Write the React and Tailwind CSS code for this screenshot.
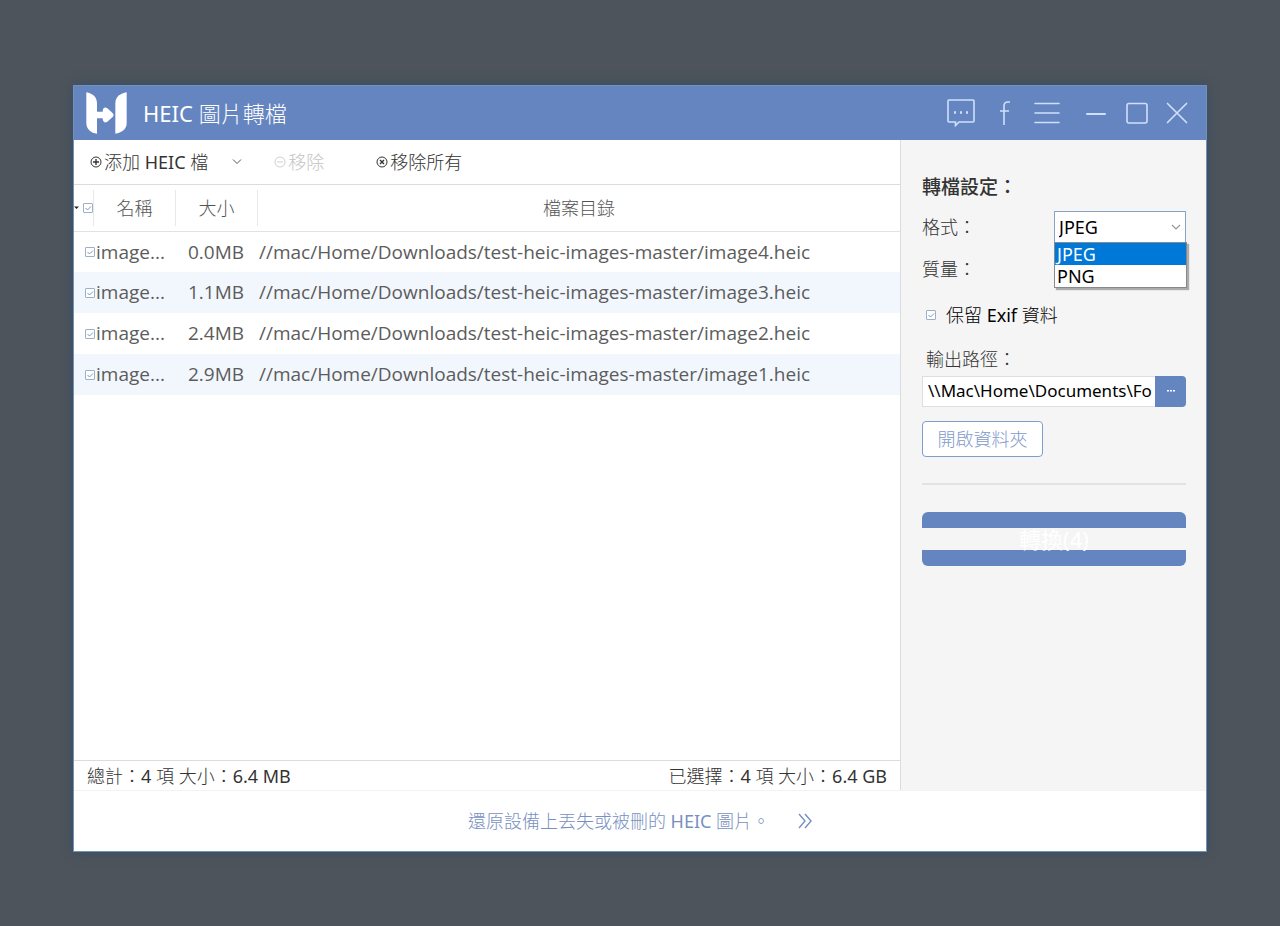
import { useState } from "react";

const initialFiles = [
  { id: 4, size: "0.0MB", path: "//mac/Home/Downloads/test-heic-images-master/image4.heic" },
  { id: 3, size: "1.1MB", path: "//mac/Home/Downloads/test-heic-images-master/image3.heic" },
  { id: 2, size: "2.4MB", path: "//mac/Home/Downloads/test-heic-images-master/image2.heic" },
  { id: 1, size: "2.9MB", path: "//mac/Home/Downloads/test-heic-images-master/image1.heic" },
];

const formats = ["JPEG", "PNG"];

const Logo = () => (
  <svg width="41" height="42" viewBox="0 0 123 126" fill="#fff" aria-hidden="true">
    <path d="M1 1C18 4 33 14 33 34V59H50C50 47 57 44 64 49L79 62C84 67 84 71 79 76L64 89C57 94 50 91 50 79H33V125C16 124 1 112 1 94Z" />
    <path d="M122 1C104 4 88 14 88 34V125C106 123 122 112 122 94Z" />
  </svg>
);

const CheckBox = ({ label, checked, onChange }) => (
  <span className="relative inline-block size-[10px] align-middle">
    <input
      type="checkbox"
      aria-label={label}
      checked={checked}
      onChange={onChange}
      className="block size-[10px] appearance-none rounded-[1px] border border-[#9db1c6] bg-white"
    />
    {checked && (
      <svg
        className="pointer-events-none absolute inset-0"
        width="10"
        height="10"
        viewBox="0 0 10 10"
        fill="none"
        stroke="#7d9bbd"
      >
        <path d="M2.5 5L4.5 7L8 3.5" />
      </svg>
    )}
  </span>
);

const CircleIcon = ({ children, thin }) => (
  <svg
    width="12"
    height="12"
    viewBox="0 0 12 12"
    fill="none"
    stroke="currentColor"
    strokeWidth={thin ? 0.8 : 1}
    aria-hidden="true"
  >
    <circle cx="6" cy="6" r="5" />
    {children}
  </svg>
);

const TitleBar = () => (
  <header className="flex h-[54px] items-center bg-[#6585c0] pr-[18px] pl-3 text-[#cfdffa]">
    <Logo />
    <h1 className="ml-4 flex-1 text-[22px] font-light text-white">
      <span className="font-normal">HEIC</span> 圖片轉檔
    </h1>
    <div className="flex items-center">
      <button aria-label="意見反饋">
        <svg width="28" height="28" viewBox="0 0 28 28" fill="none" stroke="currentColor" strokeWidth="1.6">
          <path d="M2 1H26Q27 1 27 2V22Q27 23 26 23H12L8.500 26.500V23H2Q1 23 1 22V2Q1 1 2 1Z" />
          <path d="M7 13.500H9M13 13.500H15M19 13.500H21" strokeWidth="2.400" />
        </svg>
      </button>
      <button aria-label="Facebook" className="ml-6">
        <svg width="12" height="24" viewBox="0 0 12 24" fill="none" stroke="currentColor" strokeWidth="1.6">
          <path d="M11 1H9Q5 1 5 5V24M1 10H10" />
        </svg>
      </button>
      <button aria-label="選單" className="ml-[23px]">
        <svg width="26" height="22" viewBox="0 0 26 22" fill="none" stroke="currentColor" strokeWidth="1.600" strokeLinecap="round">
          <path d="M1 1.500H25M1 11H25M1 20.500H25" />
        </svg>
      </button>
      <button aria-label="最小化" className="ml-[26px]">
        <svg width="20" height="22" viewBox="0 0 20 22" fill="none" stroke="currentColor" strokeWidth="2" strokeLinecap="round">
          <path d="M1 12H19" />
        </svg>
      </button>
      <button aria-label="最大化" className="ml-5">
        <svg width="22" height="22" viewBox="0 0 22 22" fill="none" stroke="currentColor" strokeWidth="1.600">
          <rect x="1" y="1.500" width="20" height="19.500" rx="2" />
        </svg>
      </button>
      <button aria-label="關閉" className="ml-[18px]">
        <svg width="22" height="22" viewBox="0 0 22 22" fill="none" stroke="currentColor" strokeWidth="1.700" strokeLinecap="round">
          <path d="M1.500 1.500L20.500 20.500M20.500 1.500L1.500 20.500" />
        </svg>
      </button>
    </div>
  </header>
);

const Toolbar = () => (
  <div className="flex h-[45px] items-center border-b border-[#dcdcdc] pl-4 text-lg font-light text-[#333]">
    <button className="flex items-center gap-0.5">
      <CircleIcon>
        <path d="M6 3V9M3 6H9" strokeWidth="1.400" />
      </CircleIcon>
      <span>
        添加 <span className="font-normal">HEIC</span> 檔
      </span>
    </button>
    <button aria-label="更多" className="ml-6">
      <svg width="10" height="10" viewBox="0 0 10 10" fill="none" stroke="#555">
        <path d="M1 2.500L5 6.500L9 2.500" />
      </svg>
    </button>
    <button disabled className="ml-8 flex items-center gap-0.5 text-[#c4c4c4]">
      <CircleIcon thin>
        <path d="M3 6H9" />
      </CircleIcon>
      <span>移除</span>
    </button>
    <button className="ml-[52px] flex items-center gap-0.5">
      <CircleIcon>
        <path d="M4 4L8 8M8 4L4 8" strokeWidth="1.400" />
      </CircleIcon>
      <span>移除所有</span>
    </button>
  </div>
);

const FileTable = ({ selected, toggle, toggleAll }) => (
  <table className="w-full table-fixed border-collapse text-[19px] text-[#5c5c5c]">
    <colgroup>
      <col className="w-5" />
      <col className="w-[82px]" />
      <col className="w-[82px]" />
      <col />
    </colgroup>
    <thead>
      <tr className="h-[46px] border-b border-[#e2e2e2] text-lg text-[#555]">
        <th className="p-0">
          <div className="flex h-9 items-center gap-1 border-r border-[#e8e8e8]">
            <svg width="5" height="4" viewBox="0 0 5 4" fill="#222" aria-hidden="true">
              <path d="M0 0.500H5L2.500 3Z" />
            </svg>
            <CheckBox
              label="全選"
              checked={selected.length === initialFiles.length}
              onChange={toggleAll}
            />
          </div>
        </th>
        <th className="p-0 font-light">
          <div className="h-9 border-r border-[#e8e8e8] leading-9">名稱</div>
        </th>
        <th className="p-0 font-light">
          <div className="h-9 border-r border-[#e8e8e8] leading-9">大小</div>
        </th>
        <th className="p-0 font-light">檔案目錄</th>
      </tr>
    </thead>
    <tbody className="font-['Open_Sans',sans-serif]">
      {initialFiles.map((file) => (
        <tr key={file.id} className="h-[41px] even:bg-[#f2f7fe]">
          <td colSpan={2} className="p-0 pl-[11px]">
            <div className="flex items-center gap-px">
              <CheckBox
                label={`image${file.id}.heic`}
                checked={selected.includes(file.id)}
                onChange={() => toggle(file.id)}
              />
              <span>image...</span>
            </div>
          </td>
          <td className="p-0 pr-3.5 text-right">{file.size}</td>
          <td className="truncate p-0 pl-px">{file.path}</td>
        </tr>
      ))}
    </tbody>
  </table>
);

const FormatSelect = ({ format, setFormat }) => (
  <div className="relative w-[132px] font-normal">
    <select
      id="format"
      value={format}
      onChange={(e) => setFormat(e.target.value)}
      className="block h-8 w-full appearance-none border border-[#86a3c6] bg-white pl-1 text-lg text-black"
    >
      {formats.map((item) => (
        <option key={item}>{item}</option>
      ))}
    </select>
    <svg
      className="pointer-events-none absolute top-3 right-[5px]"
      width="10"
      height="8"
      viewBox="0 0 10 8"
      fill="none"
      stroke="#999"
      strokeWidth="1.200"
    >
      <path d="M1 2L5 6L9 2" />
    </svg>
    <ul
      role="listbox"
      aria-label="格式"
      className="absolute top-full left-0 z-10 -mt-px w-[133px] border border-[#86898d] bg-white text-lg leading-[22px] text-black shadow-[2px_2px_1px_rgba(0,0,0,0.3)]"
    >
      {formats.map((item) => (
        <li
          key={item}
          role="option"
          aria-selected={item === format}
          onClick={() => setFormat(item)}
          className="px-0.5 aria-selected:bg-[#0078d7] aria-selected:text-white"
        >
          {item}
        </li>
      ))}
    </ul>
  </div>
);

const Settings = ({ count }) => {
  const [format, setFormat] = useState("JPEG");
  const [keepExif, setKeepExif] = useState(true);
  const [output, setOutput] = useState("\\\\Mac\\Home\\Documents\\Fo");

  return (
    <aside className="w-[306px] shrink-0 border-l border-[#dcdcdc] bg-[#f5f5f5] pt-[33px] pr-5 pl-[21px] text-lg font-light text-[#333]">
      <h2 className="text-[19px] font-medium">轉檔設定：</h2>
      <div className="mt-2 flex items-center justify-between">
        <label htmlFor="format">格式：</label>
        <FormatSelect format={format} setFormat={setFormat} />
      </div>
      <p className="mt-3">質量：</p>
      <div className="mt-[18px] flex items-center gap-2.5 pl-1 text-black">
        <CheckBox
          label="保留 Exif 資料"
          checked={keepExif}
          onChange={() => setKeepExif(!keepExif)}
        />
        <span>
          保留 <span className="font-normal">Exif</span> 資料
        </span>
      </div>
      <label htmlFor="output" className="mt-4 block pl-1">
        輸出路徑：
      </label>
      <div className="mt-[3px] flex h-[31px]">
        <input
          id="output"
          value={output}
          onChange={(e) => setOutput(e.target.value)}
          className="min-w-0 flex-1 border border-r-0 border-[#dedede] bg-white pl-[5px] text-[17px] font-normal text-black"
        />
        <button
          aria-label="瀏覽"
          className="flex w-[31px] items-center justify-center rounded-r-sm bg-[#6585c0]"
        >
          <svg width="8" height="2" viewBox="0 0 8 2" fill="#fff">
            <path d="M0 0H2V1.500H0ZM3 0H5V1.500H3ZM6 0H8V1.500H6Z" />
          </svg>
        </button>
      </div>
      <button className="mt-3.5 h-9 w-[121px] rounded-sm border border-[#7d9fc9] bg-white text-[#7f9acb]">
        開啟資料夾
      </button>
      <hr className="mt-[26px] border-t-2 border-[#e3e3e3]" />
      <button className="mt-[27px] block h-[54px] w-full rounded-md border-y-[16px] border-[#6585c0] bg-[#f5f5f5] bg-clip-padding text-[22px] leading-[22px] font-normal text-white">
        轉換({count})
      </button>
    </aside>
  );
};

const App = () => {
  const [selected, setSelected] = useState(initialFiles.map((file) => file.id));

  const toggle = (id) => {
    setSelected(
      selected.includes(id)
        ? selected.filter((item) => item !== id)
        : [...selected, id],
    );
  };

  const toggleAll = () => {
    setSelected(
      selected.length === initialFiles.length
        ? []
        : initialFiles.map((file) => file.id),
    );
  };

  return (
    <div className="flex min-h-screen flex-col bg-[#4d545b] px-[73px] pt-[85px] pb-[74px] font-['Noto_Sans','Noto_Sans_CJK_TC',sans-serif]">
      <div className="flex flex-1 flex-col border border-[#6e93bb] bg-white shadow-[0_0_10px_rgba(50,75,105,0.8)]">
        <TitleBar />
        <div className="flex flex-1">
          <main className="flex min-w-0 flex-1 flex-col">
            <Toolbar />
            <div className="flex-1">
              <FileTable selected={selected} toggle={toggle} toggleAll={toggleAll} />
            </div>
            <div className="flex h-[30px] items-center justify-between border-t border-[#dcdcdc] px-[13px] text-lg font-light text-[#333]">
              <span>
                總計：<span className="font-normal">4</span> 項 大小：
                <span className="font-normal">6.4 MB</span>
              </span>
              <span>
                已選擇：<span className="font-normal">{selected.length}</span> 項 大小：
                <span className="font-normal">6.4 GB</span>
              </span>
            </div>
          </main>
          <Settings count={selected.length} />
        </div>
        <footer className="flex h-[61px] items-center justify-center border-t border-[#f3f3f3]">
          <a href="#recover" className="flex items-center gap-7 text-lg font-light text-[#7890c0]">
            <span>
              還原設備上丟失或被刪的 <span className="font-normal">HEIC</span> 圖片。
            </span>
            <svg width="14" height="16" viewBox="0 0 14 16" fill="none" stroke="currentColor" strokeWidth="1.400">
              <path d="M1 1L7 8L1 15M7 1L13 8L7 15" />
            </svg>
          </a>
        </footer>
      </div>
    </div>
  );
};

export default App;
